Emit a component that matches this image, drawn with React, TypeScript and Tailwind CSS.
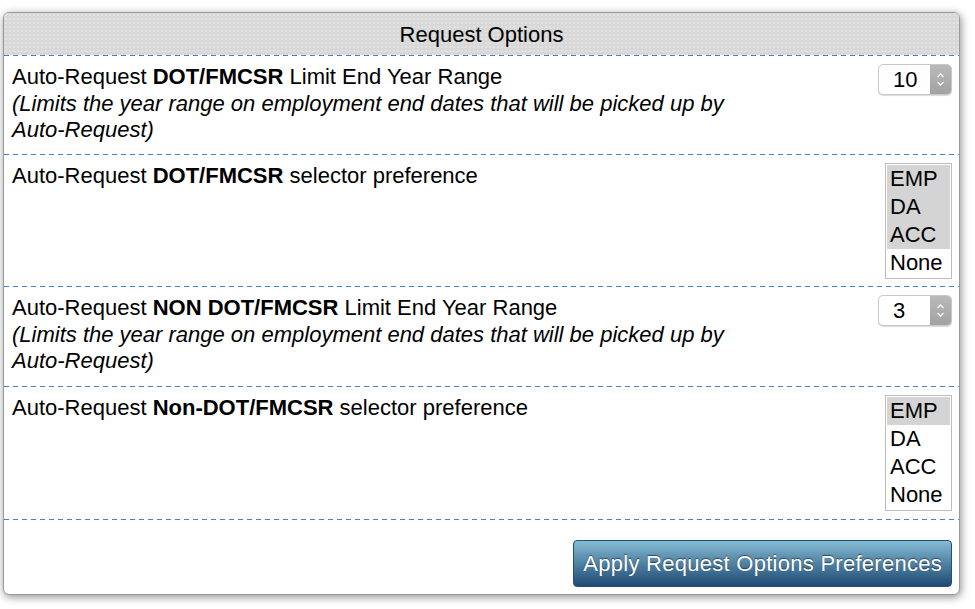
import React from 'react'

const font = { fontFamily: '"Liberation Sans", Arial, Helvetica, sans-serif' }

function Stepper({ value }: { value: string }) {
  return (
    <div className="flex h-[31px] w-[74px] overflow-hidden rounded-[5px] border border-[#c8c8c8] bg-white shadow-[0_1px_1px_rgba(0,0,0,0.15)]">
      <div className="flex flex-1 items-center pl-[14px] text-[22px] leading-none text-black">{value}</div>
      <div className="flex w-[21px] items-center justify-center bg-gradient-to-b from-[#b9b9b9] to-[#a2a2a2]">
        <svg width="9" height="15" viewBox="0 0 9 15" fill="none" stroke="#f4f4f4" strokeWidth="1.4">
          <path d="M1.5 5 L4.5 2 L7.5 5" />
          <path d="M1.5 10 L4.5 13 L7.5 10" />
        </svg>
      </div>
    </div>
  )
}

function ListBox({ selected }: { selected: string[] }) {
  const opts = ['EMP', 'DA', 'ACC', 'None']
  return (
    <div className="w-[67px] border border-[#bdbdbd] bg-white p-[1px]">
      {opts.map((o) => (
        <div
          key={o}
          className={`h-[28px] pl-[3px] text-[22px] leading-[28px] text-black ${selected.includes(o) ? 'bg-[#d4d4d4]' : 'bg-white'}`}
        >
          {o}
        </div>
      ))}
    </div>
  )
}

function Dashes() {
  return <div className="h-px bg-[repeating-linear-gradient(90deg,#3f84d2_0_5px,transparent_5px_9px)]" />
}

function Row({ children, control, h }: { children: React.ReactNode; control: React.ReactNode; h: string }) {
  return (
    <>
      <div className={`flex justify-between pl-[8px] pr-[7px] ${h}`}>
        <div className="pt-[8px] text-[22px] leading-[26.5px] text-black">{children}</div>
        <div className="pt-[8px]">{control}</div>
      </div>
      <Dashes />
    </>
  )
}

export default function App() {
  return (
    <div className="h-[609px] w-[975px] bg-white pl-[3px] pt-[12px]" style={font}>
      <div className="w-[957px] overflow-hidden rounded-[6px] border border-[#9a9a9a] bg-white shadow-[1px_2px_8px_rgba(0,0,0,0.45)]">
        <div className="flex h-[42px] items-center justify-center bg-[#d8d8d8] bg-[radial-gradient(#e2e2e2_1px,transparent_1px)] bg-[length:4px_4px] text-[22px] text-black">
          Request Options
        </div>
        <Dashes />
        <Row h="h-[98px]" control={<Stepper value="10" />}>
          <div>
            Auto-Request <b>DOT/FMCSR</b> Limit End Year Range
          </div>
          <div className="w-[760px] italic">
            (Limits the year range on employment end dates that will be picked up by Auto-Request)
          </div>
        </Row>
        <Row h="h-[131px]" control={<ListBox selected={['EMP', 'DA', 'ACC']} />}>
          <div>
            Auto-Request <b>DOT/FMCSR</b> selector preference
          </div>
        </Row>
        <Row h="h-[99px]" control={<Stepper value="3" />}>
          <div>
            Auto-Request <b>NON DOT/FMCSR</b> Limit End Year Range
          </div>
          <div className="w-[760px] italic">
            (Limits the year range on employment end dates that will be picked up by Auto-Request)
          </div>
        </Row>
        <Row h="h-[132px]" control={<ListBox selected={['EMP']} />}>
          <div>
            Auto-Request <b>Non-DOT/FMCSR</b> selector preference
          </div>
        </Row>
        <div className="flex h-[74px] justify-end pr-[7px] pt-[20px]">
          <button className="h-[47px] rounded-[4px] border border-[#245077] bg-gradient-to-b from-[#86bcd4] to-[#1e4b74] px-[9px] text-[22px] tracking-[0.27px] text-white [text-shadow:0_-1px_1px_rgba(0,0,0,0.5)]">
            Apply Request Options Preferences
          </button>
        </div>
      </div>
    </div>
  )
}
